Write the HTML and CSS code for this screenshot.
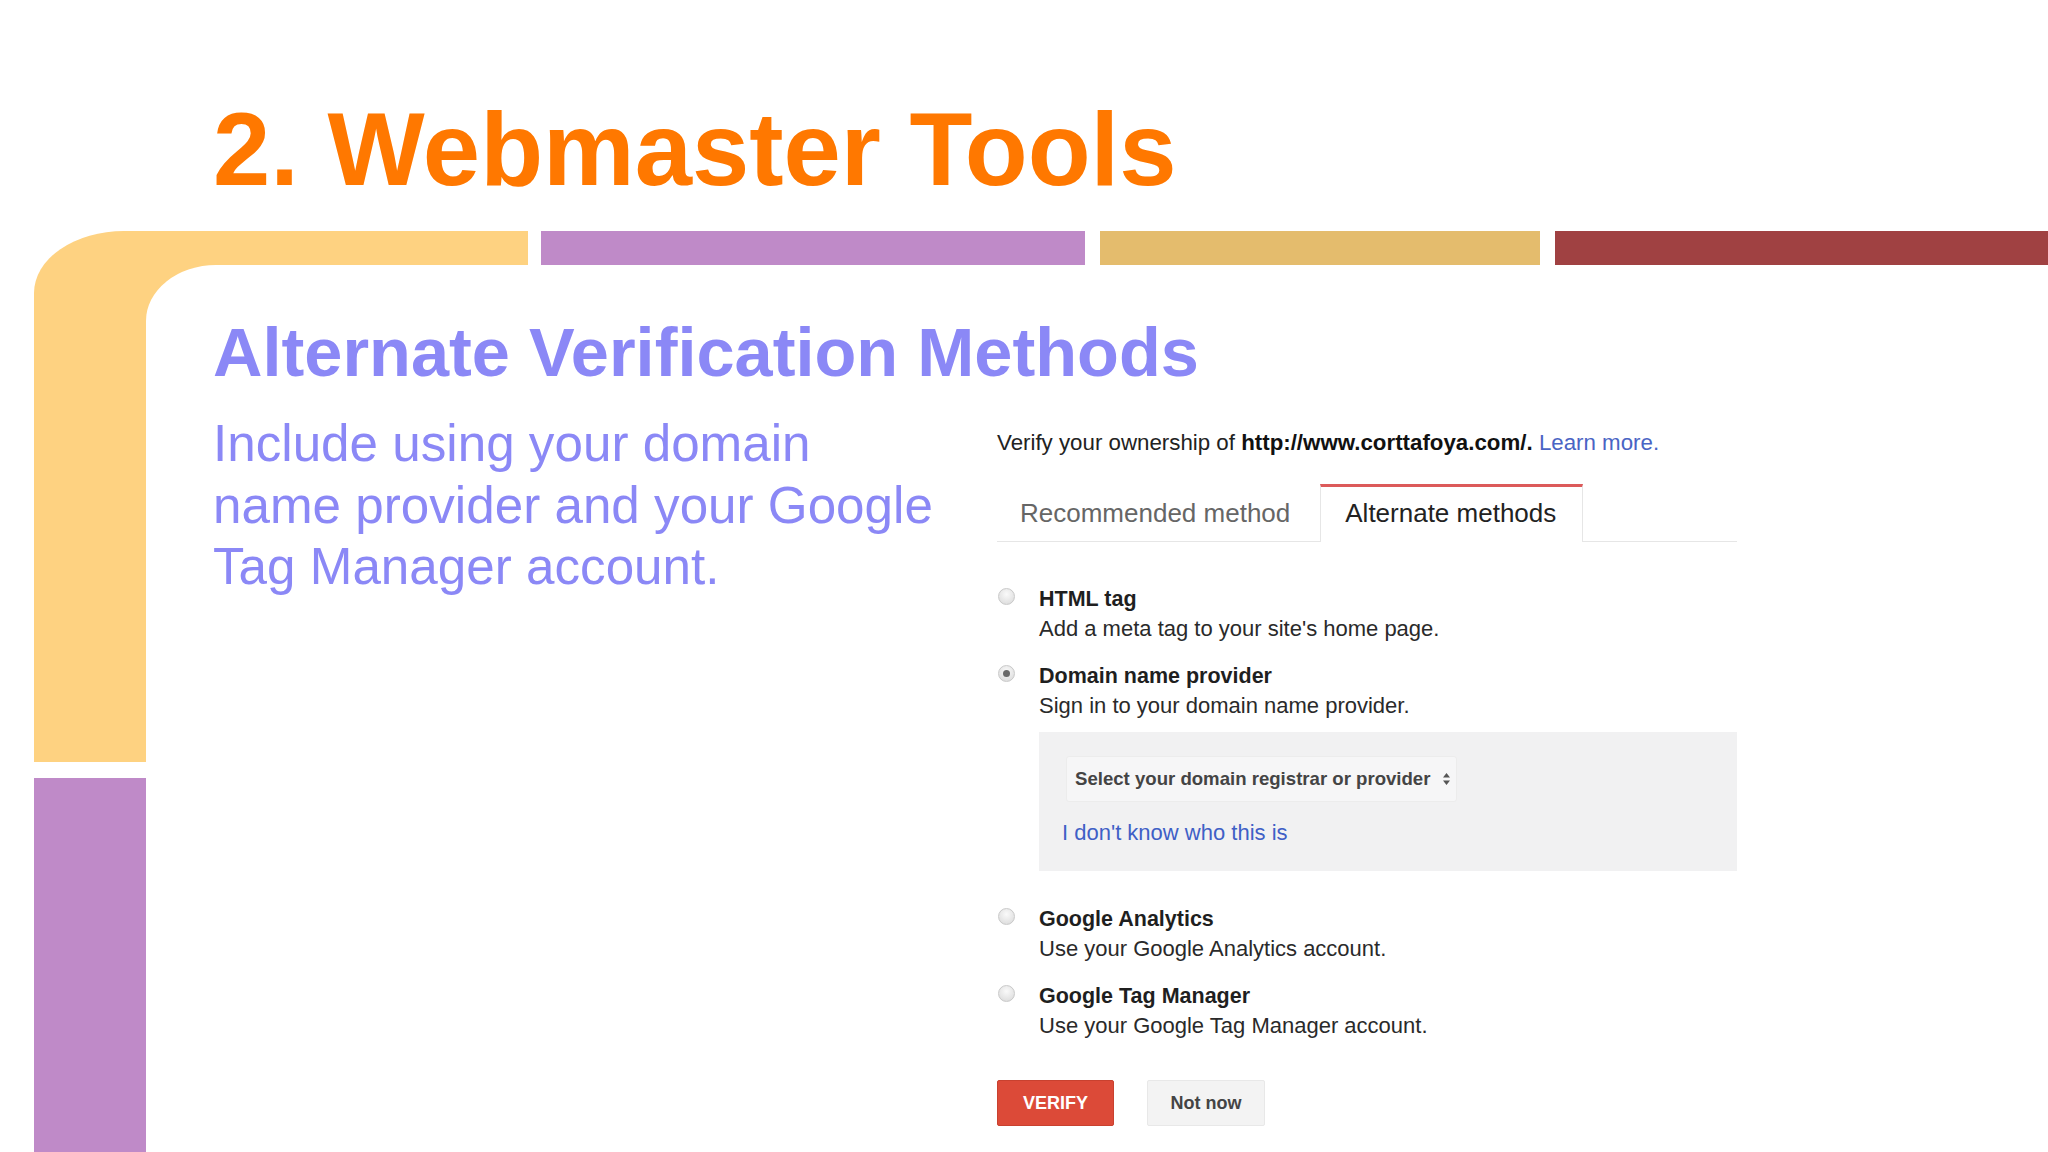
FILE: index.html
```html
<!DOCTYPE html>
<html lang="en">
<head>
<meta charset="utf-8">
<title>2. Webmaster Tools</title>
<link rel="stylesheet" href="styles.css">
</head>
<body>
<header class="head">
  <h1 class="title">2. Webmaster Tools</h1>
</header>
<div class="deck">
  <div class="rail">
    <div class="rail-top"></div>
    <div class="rail-bottom"></div>
  </div>
  <div class="main">
    <div class="bars">
      <div class="bar bar-yellow"></div>
      <div class="bar bar-purple"></div>
      <div class="bar bar-gold"></div>
      <div class="bar bar-red"></div>
    </div>
    <section class="content">
      <h2 class="subtitle">Alternate Verification Methods</h2>
      <p class="lead">Include using your domain<br>name provider and your Google<br>Tag Manager account.</p>
      <div class="panel">
        <p class="verify">Verify your ownership of <b>http://www.corttafoya.com/.</b> <a class="link">Learn more.</a></p>
        <div class="tabs">
          <div class="tab">Recommended method</div>
          <div class="tab tab-active">Alternate methods</div>
        </div>
        <ul class="options">
          <li class="option">
            <span class="radio"></span>
            <div class="opt-text">
              <div class="opt-title">HTML tag</div>
              <div class="opt-desc">Add a meta tag to your site's home page.</div>
            </div>
          </li>
          <li class="option">
            <span class="radio radio-on"></span>
            <div class="opt-text">
              <div class="opt-title">Domain name provider</div>
              <div class="opt-desc">Sign in to your domain name provider.</div>
              <div class="provider">
                <div class="select">Select your domain registrar or provider
                  <svg class="arrows" width="9" height="14" viewBox="0 0 9 14"><path d="M4.5 1 L8 5.5 L1 5.5 Z M4.5 13 L8 8.5 L1 8.5 Z" fill="#555"/></svg>
                </div>
                <a class="link provider-link">I don't know who this is</a>
              </div>
            </div>
          </li>
          <li class="option option-gap">
            <span class="radio"></span>
            <div class="opt-text">
              <div class="opt-title">Google Analytics</div>
              <div class="opt-desc">Use your Google Analytics account.</div>
            </div>
          </li>
          <li class="option">
            <span class="radio"></span>
            <div class="opt-text">
              <div class="opt-title">Google Tag Manager</div>
              <div class="opt-desc">Use your Google Tag Manager account.</div>
            </div>
          </li>
        </ul>
        <div class="actions">
          <button class="btn btn-verify">VERIFY</button>
          <button class="btn btn-later">Not now</button>
        </div>
      </div>
    </section>
  </div>
</div>
</body>
</html>
```
FILE: styles.css
```css
:root {
  --yellow: #fed281;
  --purple: #bf8ac8;
  --gold: #e4bc6d;
  --red: #a04142;
  --orange: #ff7800;
  --violet: #8b88f6;
}

* { box-sizing: border-box; }

html, body {
  margin: 0;
  padding: 0;
}

body {
  width: 2048px;
  height: 1152px;
  overflow: hidden;
  background: #ffffff;
  font-family: "Liberation Sans", Arial, sans-serif;
}

.head {
  height: 231px;
  padding: 98px 0 0 213px;
}

.title {
  margin: 0;
  font-size: 103px;
  line-height: 104px;
  font-weight: bold;
  color: var(--orange);
}

.deck {
  display: flex;
  height: 921px;
  padding-left: 34px;
}

.rail {
  width: 112px;
  display: flex;
  flex-direction: column;
  gap: 16px;
}

.rail-top {
  height: 531px;
  background: var(--yellow);
  border-top-left-radius: 90px 62px;
}

.rail-bottom {
  flex: 1;
  background: var(--purple);
}

.main {
  flex: 1;
  display: flex;
  flex-direction: column;
  background: linear-gradient(var(--yellow), var(--yellow)) 0 0 / 120px 120px no-repeat;
}

.bars {
  display: flex;
  height: 34px;
}

.bar { height: 34px; }
.bar-yellow { width: 382px; background: var(--yellow); }
.bar-purple { width: 544px; margin-left: 13px; background: var(--purple); }
.bar-gold { width: 440px; margin-left: 15px; background: var(--gold); }
.bar-red { flex: 1; margin-left: 15px; background: var(--red); }

.content {
  flex: 1;
  background: #ffffff;
  border-top-left-radius: 70px 56px;
  padding-left: 67px;
  display: grid;
  grid-template-columns: 784px 740px;
  align-items: start;
  align-content: start;
}

.subtitle {
  grid-column: 1 / -1;
  margin: 54px 0 0 0;
  font-size: 68.5px;
  line-height: 68px;
  font-weight: bold;
  color: var(--violet);
}

.lead {
  margin: 26px 0 0 0;
  font-size: 51.2px;
  line-height: 61.5px;
  color: var(--violet);
}

.panel {
  margin-top: 42px;
  width: 740px;
  color: #222;
}

.verify {
  margin: 0;
  font-size: 22.3px;
  line-height: 28px;
  color: #222;
}

.verify b { color: #111; }

.link {
  color: #4a64c4;
  text-decoration: none;
}

.tabs {
  margin-top: 27px;
  display: flex;
  align-items: flex-end;
  border-bottom: 1px solid #e6e6e6;
}

.tab {
  font-size: 26px;
  line-height: 30px;
  color: #666;
  padding: 14px 30px 13px 23px;
}

.tab-active {
  color: #222;
  background: #ffffff;
  border-top: 3px solid #dc5a5a;
  border-left: 1px solid #e6e6e6;
  border-right: 1px solid #e6e6e6;
  padding: 11px 26px 14px 24px;
  margin-bottom: -1px;
}

.options {
  list-style: none;
  margin: 43px 0 0 0;
  padding: 0;
  display: flex;
  flex-direction: column;
  gap: 18px;
}

.option {
  display: flex;
  align-items: flex-start;
}

.option-gap { margin-top: 16px; }

.radio {
  width: 17px;
  height: 17px;
  margin: 3px 0 0 1px;
  border-radius: 50%;
  border: 1px solid #c9c9c9;
  background: radial-gradient(circle at 50% 35%, #fafafa 0%, #e2e2e2 70%, #d4d4d4 100%);
  display: flex;
  align-items: center;
  justify-content: center;
  flex: none;
}

.radio-on::after {
  content: "";
  width: 7px;
  height: 7px;
  border-radius: 50%;
  background: #6a6a6a;
}

.opt-text {
  flex: 1;
  margin-left: 24px;
}

.opt-title {
  font-size: 21.5px;
  line-height: 29px;
  font-weight: bold;
  color: #1f1f1f;
}

.opt-desc {
  font-size: 22px;
  line-height: 30px;
  color: #2a2a2a;
}

.provider {
  margin-top: 11px;
  height: 139px;
  background: #f1f1f2;
  padding: 24px 0 0 23px;
  display: flex;
  flex-direction: column;
  align-items: flex-start;
}

.select {
  margin-left: 4px;
  height: 46px;
  width: 391px;
  padding-left: 8px;
  background: #f6f6f7;
  border: 1px solid #ececec;
  border-radius: 3px;
  font-size: 18.6px;
  line-height: 44px;
  font-weight: bold;
  color: #444;
  display: flex;
  align-items: center;
  gap: 12px;
}

.arrows { flex: none; }

.provider-link {
  margin-top: 17px;
  font-size: 22px;
  line-height: 28px;
  color: #3f5fc6;
}

.actions {
  margin-top: 39px;
  display: flex;
  gap: 33px;
}

.btn {
  height: 46px;
  border-radius: 2px;
  font-family: "Liberation Sans", Arial, sans-serif;
  font-size: 18px;
  font-weight: bold;
  padding: 0;
}

.btn-verify {
  width: 117px;
  background: #dc4a38;
  border: 1px solid #c9412f;
  color: #ffffff;
}

.btn-later {
  width: 118px;
  background: #f3f3f3;
  border: 1px solid #e8e8e8;
  color: #444;
}
```
